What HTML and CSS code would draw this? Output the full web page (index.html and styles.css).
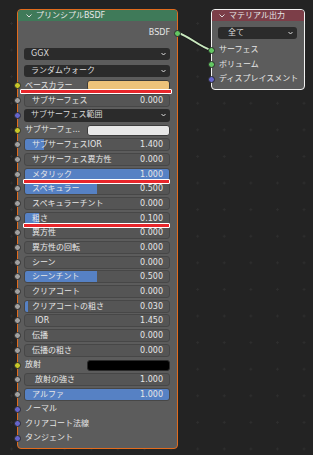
FILE: index.html
```html
<!DOCTYPE html>
<html lang="ja">

<head>
    <meta charset="UTF-8">
    <meta name="viewport" content="width=device-width, initial-scale=1.0">
    <title>Shader Nodes</title>
    <link rel="stylesheet" href="styles.css">
</head>

<body>
    <div class="editor">
        <!-- link between the two nodes -->
        <svg class="links" width="313" height="455">
            <path d="M178 33 C189 36, 200 47, 211 50" class="link-shadow" />
            <path d="M178 33 C189 36, 200 47, 211 50" class="link" />
        </svg>

        <div class="node principled">
            <div class="node-header">
                <svg class="chev" width="6" height="4" viewBox="0 0 6 4"><polyline points="0.5,0.5 3,3 5.5,0.5" /></svg>
                <span>プリンシプルBSDF</span>
            </div>
            <div class="node-outputs">
                <div class="out-row">BSDF<i class="socket shader"></i></div>
            </div>
            <div class="node-props">
                <div class="dropdown">GGX<svg class="arrow" width="5" height="4" viewBox="0 0 5 4"><polyline points="0.5,1 2.5,3 4.5,1" /></svg></div>
                <div class="dropdown">ランダムウォーク<svg class="arrow" width="5" height="4" viewBox="0 0 5 4"><polyline points="0.5,1 2.5,3 4.5,1" /></svg></div>
            </div>
            <div class="node-inputs">
                <div class="row plain"><i class="socket color"></i><span class="label">ベースカラー</span><span class="swatch base"></span></div>
                <div class="row"><i class="socket"></i><div class="field" style="--v: 0%"><span>サブサーフェス</span><span>0.000</span></div></div>
                <div class="row"><i class="socket vector"></i><div class="menu">サブサーフェス範囲<svg class="arrow" width="5" height="4" viewBox="0 0 5 4"><polyline points="0.5,1 2.5,3 4.5,1" /></svg></div></div>
                <div class="row plain"><i class="socket color"></i><span class="label">サブサーフェ...</span><span class="swatch white"></span></div>
                <div class="row"><i class="socket"></i><div class="field" style="--v: 13%"><span>サブサーフェスIOR</span><span>1.400</span></div></div>
                <div class="row"><i class="socket"></i><div class="field" style="--v: 0%"><span>サブサーフェス異方性</span><span>0.000</span></div></div>
                <div class="row"><i class="socket"></i><div class="field" style="--v: 100%"><span>メタリック</span><span>1.000</span></div></div>
                <div class="row"><i class="socket"></i><div class="field" style="--v: 50%"><span>スペキュラー</span><span>0.500</span></div></div>
                <div class="row"><i class="socket"></i><div class="field" style="--v: 0%"><span>スペキュラーチント</span><span>0.000</span></div></div>
                <div class="row"><i class="socket"></i><div class="field" style="--v: 10%"><span>粗さ</span><span>0.100</span></div></div>
                <div class="row"><i class="socket"></i><div class="field" style="--v: 0%"><span>異方性</span><span>0.000</span></div></div>
                <div class="row"><i class="socket"></i><div class="field" style="--v: 0%"><span>異方性の回転</span><span>0.000</span></div></div>
                <div class="row"><i class="socket"></i><div class="field" style="--v: 0%"><span>シーン</span><span>0.000</span></div></div>
                <div class="row"><i class="socket"></i><div class="field" style="--v: 50%"><span>シーンチント</span><span>0.500</span></div></div>
                <div class="row"><i class="socket"></i><div class="field" style="--v: 0%"><span>クリアコート</span><span>0.000</span></div></div>
                <div class="row"><i class="socket"></i><div class="field" style="--v: 2%"><span>クリアコートの粗さ</span><span>0.030</span></div></div>
                <div class="row"><i class="socket"></i><div class="field indent" style="--v: 0%"><span>IOR</span><span>1.450</span></div></div>
                <div class="row"><i class="socket"></i><div class="field" style="--v: 0%"><span>伝播</span><span>0.000</span></div></div>
                <div class="row"><i class="socket"></i><div class="field" style="--v: 0%"><span>伝播の粗さ</span><span>0.000</span></div></div>
                <div class="row plain"><i class="socket color"></i><span class="label">放射</span><span class="swatch black"></span></div>
                <div class="row"><i class="socket"></i><div class="field indent" style="--v: 0%"><span>放射の強さ</span><span>1.000</span></div></div>
                <div class="row"><i class="socket"></i><div class="field" style="--v: 100%"><span>アルファ</span><span>1.000</span></div></div>
                <div class="row plain"><i class="socket vector"></i><span class="label">ノーマル</span></div>
                <div class="row plain"><i class="socket vector"></i><span class="label">クリアコート法線</span></div>
                <div class="row plain"><i class="socket vector"></i><span class="label">タンジェント</span></div>
            </div>
        </div>

        <div class="node output">
            <div class="node-header">
                <svg class="chev" width="6" height="4" viewBox="0 0 6 4"><polyline points="0.5,0.5 3,3 5.5,0.5" /></svg>
                <span>マテリアル出力</span>
            </div>
            <div class="node-props">
                <div class="dropdown">全て<svg class="arrow" width="5" height="4" viewBox="0 0 5 4"><polyline points="0.5,1 2.5,3 4.5,1" /></svg></div>
            </div>
            <div class="node-inputs">
                <div class="row plain"><i class="socket shader"></i><span class="label">サーフェス</span></div>
                <div class="row plain"><i class="socket shader"></i><span class="label">ボリューム</span></div>
                <div class="row plain"><i class="socket vector"></i><span class="label">ディスプレイスメント</span></div>
            </div>
        </div>

        <!-- red underline marks -->
        <div class="mark mark-base"></div>
        <div class="mark mark-metal"></div>
        <div class="mark mark-rough"></div>
    </div>
</body>

</html>
```

FILE: styles.css
```css
body {
    margin: 0;
    font-family: "DejaVu Sans", "Noto Sans CJK JP", sans-serif;
    font-size: 8px;
    color: #e6e6e6;
    background: #232323;
}

.editor {
    position: relative;
    width: 313px;
    height: 455px;
    overflow: hidden;
    background-color: #232323;
    background-image: radial-gradient(circle, #2e2e2e 0 1px, transparent 1.4px);
    background-size: 26.6px 26.6px;
    background-position: -1.8px 10.2px;
}

.links {
    position: absolute;
    left: 0;
    top: 0;
}

.link-shadow {
    fill: none;
    stroke: #1a1a1a;
    stroke-width: 3.5;
}

.link {
    fill: none;
    stroke: #c9e8bf;
    stroke-width: 2;
}

/* nodes */

.node {
    position: absolute;
    box-sizing: border-box;
    background: #5c5c5c;
    border-radius: 4px;
}

.principled {
    left: 17px;
    top: 9px;
    width: 161px;
    height: 440px;
    border: 1px solid #e26b1d;
}

.output {
    left: 211px;
    top: 9px;
    width: 94px;
    height: 81px;
    border: 1px solid #f2f2f2;
}

.node-header {
    height: 11px;
    display: flex;
    align-items: center;
    gap: 4px;
    padding-left: 8px;
    border-radius: 3px 3px 0 0;
    line-height: 11px;
}

.principled .node-header {
    background: #3f7a59;
}

.output .node-header {
    background: #7c3e48;
    padding-left: 7px;
}

.chev polyline,
.arrow polyline {
    fill: none;
    stroke: #dcdcdc;
    stroke-width: 1;
}

.node-outputs {
    padding-top: 5px;
}

.out-row {
    position: relative;
    height: 14px;
    line-height: 14px;
    text-align: right;
    padding-right: 7px;
}

.node-props {
    display: flex;
    flex-direction: column;
    gap: 5px;
    margin-top: 7.5px;
    padding: 0 7px 0 6px;
}

.output .node-props {
    margin-top: 6px;
}

.dropdown,
.menu {
    display: flex;
    align-items: center;
    justify-content: space-between;
    height: 12px;
    padding: 0 4px 0 7px;
    background: #2b2b2b;
    border-radius: 3px;
    color: #dadada;
    line-height: 12px;
}

.output .dropdown {
    padding-left: 10px;
}

.menu {
    flex: 1;
    height: 13px;
    box-sizing: border-box;
    padding-left: 7px;
}

.node-inputs {
    margin-top: 2.15px;
}

.output .node-inputs {
    margin-top: 3.75px;
}

.row {
    position: relative;
    height: 14.7px;
    display: flex;
    align-items: center;
    padding: 0 7px 0 6px;
}

.output .row {
    height: 14.5px;
}

.row.plain .label {
    flex: 1;
    padding-left: 1px;
    line-height: 12px;
    white-space: nowrap;
}

.output .row.plain .label {
    padding-left: 1px;
}

.field {
    flex: 1;
    height: 13px;
    box-sizing: border-box;
    display: flex;
    align-items: center;
    justify-content: space-between;
    padding: 0 6px 0 7px;
    border: 1px solid #474747;
    border-radius: 3px;
    background: linear-gradient(to right, #5681c4 var(--v), #555555 var(--v));
    line-height: 11px;
    white-space: nowrap;
}

.field.indent {
    padding-left: 10px;
}

.swatch {
    width: 83px;
    height: 11px;
    box-sizing: border-box;
    border-radius: 3px;
    border: 1px solid #3c3c3c;
}

.swatch.base {
    background: #eec37a;
}

.swatch.white {
    background: #e8e8e8;
}

.swatch.black {
    background: #000000;
    border-color: #2a2a2a;
}

/* sockets */

.socket {
    position: absolute;
    top: 50%;
    left: -4px;
    width: 7px;
    height: 7px;
    box-sizing: border-box;
    margin-top: -3.5px;
    border-radius: 50%;
    border: 1px solid #2b2b2b;
    background: #a1a1a1;
}

.output .socket {
    left: -4.5px;
}

.socket.color {
    background: #c7c729;
}

.socket.vector {
    background: #6565cc;
}

.socket.shader {
    background: #63c763;
}

.out-row .socket {
    left: auto;
    right: -4px;
}

/* red underline marks */

.mark {
    position: absolute;
    height: 3px;
    background: #e8262b;
    border: 1px solid #ffffff;
    border-radius: 1px;
}

.mark-base {
    left: 20px;
    top: 89.2px;
    width: 150px;
}

.mark-metal {
    left: 23px;
    top: 178.5px;
    width: 145px;
}

.mark-rough {
    left: 23px;
    top: 223.2px;
    width: 145px;
}
```
